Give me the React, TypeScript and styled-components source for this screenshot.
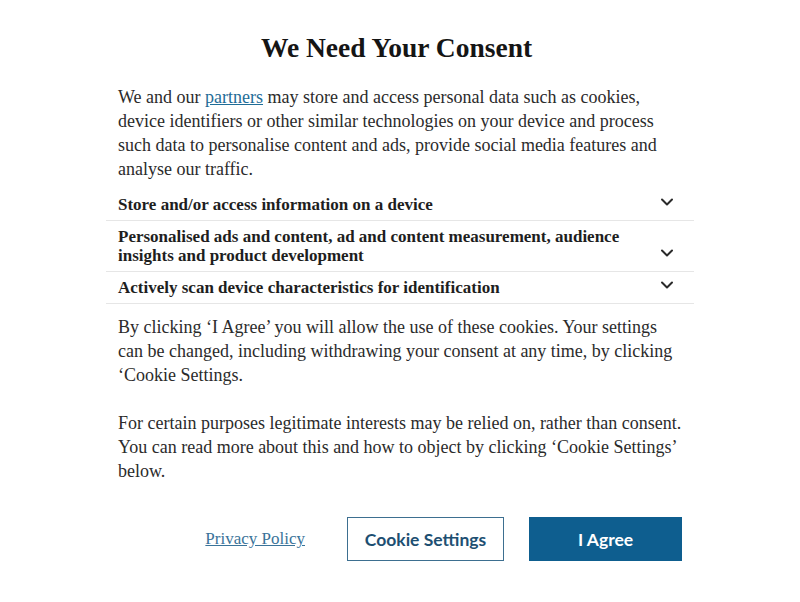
import styled, {createGlobalStyle} from 'styled-components';

const GlobalStyle = createGlobalStyle`
  html, body {
    margin: 0;
    padding: 0;
    background: #ffffff;
  }
  body {
    font-family: 'Liberation Serif', 'Times New Roman', serif;
    color: #2b2b2b;
  }
`;

const purposes = [
  'Store and/or access information on a device',
  'Personalised ads and content, ad and content measurement, audience insights and product development',
  'Actively scan device characteristics for identification',
];

const Chevron = () => (
  <svg width="14" height="12" viewBox="0 0 14 12" aria-hidden="true">
    <path
      d="M2 3.5 L7 8.5 L12 3.5"
      fill="none"
      stroke="#2a2a2a"
      strokeWidth="2"
      strokeLinecap="round"
      strokeLinejoin="round"
    />
  </svg>
);

export default function App() {
  return (
    <>
      <GlobalStyle />
      <Dialog>
        <Title>We Need Your Consent</Title>
        <Intro>
          We and our <InlineLink href="#">partners</InlineLink> may store and
          access personal data such as cookies, device identifiers or other
          similar technologies on your device and process such data to
          personalise content and ads, provide social media features and
          analyse our traffic.
        </Intro>
        <PurposeList>
          {purposes.map((p) => (
            <PurposeRow key={p}>
              <PurposeText>{p}</PurposeText>
              <ChevronWrap>
                <Chevron />
              </ChevronWrap>
            </PurposeRow>
          ))}
        </PurposeList>
        <Notice>
          <p>
            By clicking ‘I Agree’ you will allow the use of these cookies. Your
            settings can be changed, including withdrawing your consent at any
            time, by clicking ‘Cookie Settings.
          </p>
          <p>
            For certain purposes legitimate interests may be relied on, rather
            than consent. You can read more about this and how to object by
            clicking ‘Cookie Settings’ below.
          </p>
        </Notice>
        <Actions>
          <PolicyLink href="#">Privacy Policy</PolicyLink>
          <ActionButton>Cookie Settings</ActionButton>
          <ActionButton $primary>I Agree</ActionButton>
        </Actions>
      </Dialog>
    </>
  );
}

const Dialog = styled.div`
  width: 588px;
  margin: 0 auto;
  padding-top: 31px;
  box-sizing: border-box;
`;

const Title = styled.h1`
  margin: 0 0 21px;
  padding-right: 7px;
  text-align: center;
  font-size: 27.5px;
  line-height: 33px;
  font-weight: 700;
  color: #151515;
`;

const Intro = styled.p`
  margin: 0 0 8px;
  padding: 0 10px 0 12px;
  font-size: 18px;
  line-height: 24px;
`;

const InlineLink = styled.a`
  color: #1f6d97;
  text-decoration: underline;
`;

const PurposeList = styled.div`
  display: flex;
  flex-direction: column;
`;

const PurposeRow = styled.div`
  display: flex;
  justify-content: space-between;
  align-items: flex-end;
  padding: 6px 20px 6px 12px;
  border-bottom: 1px solid #e6e6e6;
`;

const PurposeText = styled.span`
  max-width: 515px;
  font-size: 17px;
  line-height: 19px;
  font-weight: 700;
  color: #1e1e1e;
`;

const ChevronWrap = styled.span`
  display: flex;
  margin-bottom: 6px;
`;

const Notice = styled.div`
  padding: 11px 10px 0 12px;
  font-size: 18px;
  line-height: 24px;

  p {
    margin: 0 0 24px;
  }

  p:last-child {
    margin-bottom: 0;
  }
`;

const Actions = styled.div`
  display: flex;
  justify-content: flex-end;
  align-items: center;
  padding: 34px 12px 0;
`;

const PolicyLink = styled.a`
  margin-right: 42px;
  font-family: 'Liberation Serif', 'Times New Roman', serif;
  font-size: 17px;
  color: #3a7399;
  text-decoration: underline;
`;

const ActionButton = styled.button<{$primary?: boolean}>`
  height: 44px;
  width: ${(props) => (props.$primary ? '153px' : '157px')};
  margin-left: ${(props) => (props.$primary ? '25px' : '0')};
  border: 1px solid ${(props) => (props.$primary ? '#0e5e8f' : '#3d6f90')};
  background: ${(props) => (props.$primary ? '#0e5e8f' : '#ffffff')};
  color: ${(props) => (props.$primary ? '#ffffff' : '#1d4f72')};
  font-family: Lato, 'Open Sans', sans-serif;
  font-size: 17.5px;
  font-weight: 700;
  cursor: pointer;
`;
